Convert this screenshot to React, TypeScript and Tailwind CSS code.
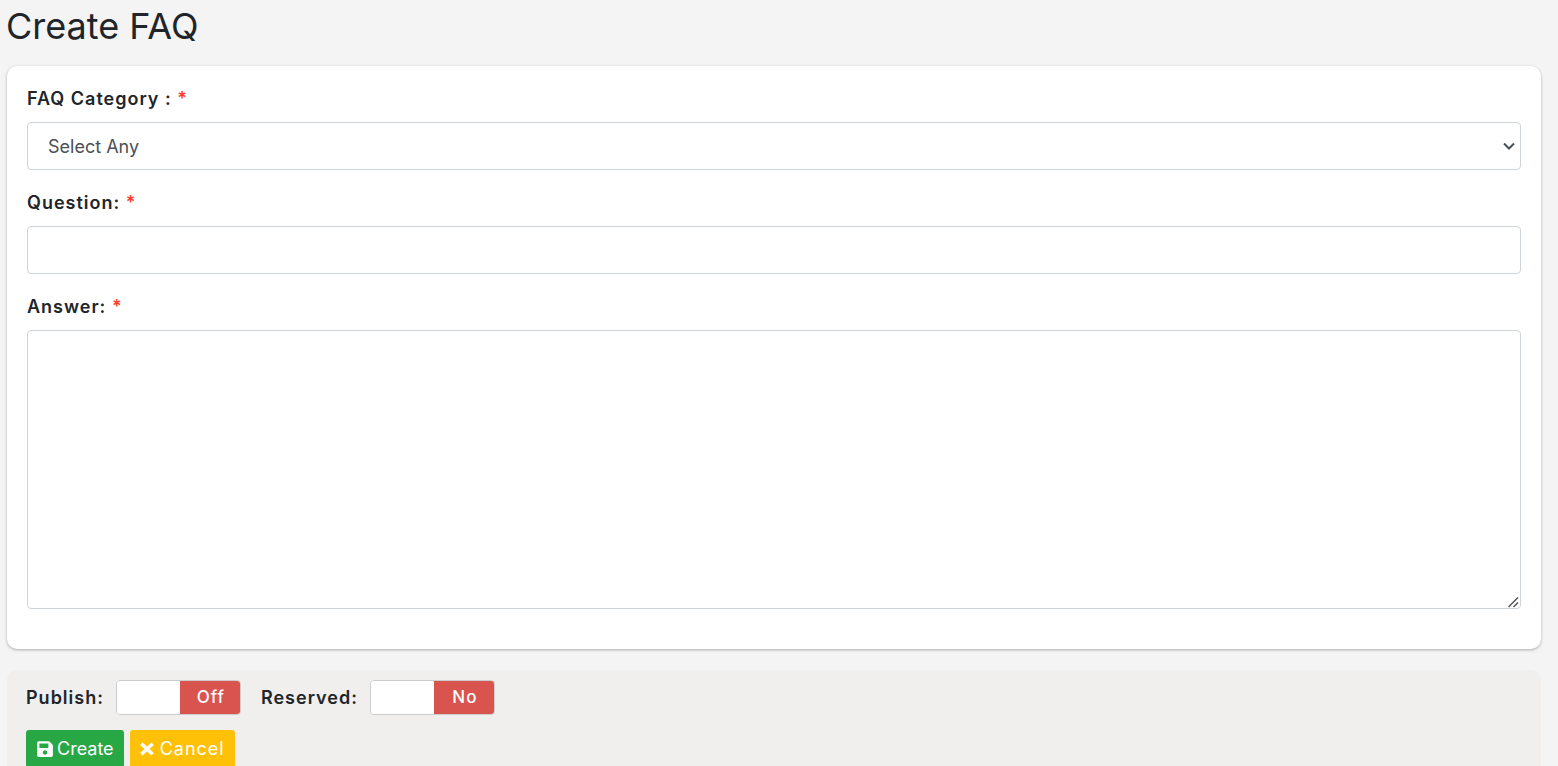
import type { ReactNode } from 'react';
import { FaSave } from 'react-icons/fa';

const fieldClass =
  'block w-full rounded border border-[#ced4da] bg-white px-5 text-lg text-[#495057] outline-none focus:border-[#80bdff]';

function FieldLabel({ htmlFor, children }: { htmlFor: string; children: ReactNode }) {
  return (
    <label htmlFor={htmlFor} className="mb-[10px] block text-lg leading-[26px] font-semibold tracking-[1px]">
      {children} <span className="text-[#ff3b30]">*</span>
    </label>
  );
}

function CloseIcon() {
  return (
    <svg viewBox="0 0 14 14" className="size-[14px]" stroke="currentColor" strokeWidth="3.6">
      <path d="M1.4 1.8 L12.6 12.2 M12.6 1.8 L1.4 12.2" />
    </svg>
  );
}

function Toggle({ id, label, on, off }: { id: string; label: string; on: string; off: string }) {
  return (
    <div className="flex items-center gap-3">
      <label htmlFor={id} className="text-lg leading-[26px] font-semibold tracking-[1px]">
        {label}
      </label>
      <label className="group relative flex h-[35px] w-[125px] cursor-pointer overflow-hidden rounded border border-[#cccccc] bg-white text-[17px] font-medium tracking-[1px] text-white">
        <input id={id} type="checkbox" className="peer sr-only" />
        <span className="hidden w-[60px] items-center justify-center bg-[#337ab7] group-has-checked:flex">
          {on}
        </span>
        <span className="flex-1 bg-white" />
        <span className="flex w-[60px] items-center justify-center bg-[#d9534f] pl-[2px] group-has-checked:hidden">
          {off}
        </span>
      </label>
    </div>
  );
}

export default function App() {
  return (
    <div className="min-h-screen bg-[#f4f4f4] pr-[17px] pl-[7px] font-['Inter',sans-serif] text-[#212529]">
      <h1 className="-ml-px pt-1 text-4xl leading-[44px]">Create FAQ</h1>
      <form className="mt-[18px]">
        <div className="rounded-[10px] bg-white px-5 pt-5 pb-10 shadow-[0_1px_3px_rgba(0,0,0,0.3)]">
          <div className="mb-5">
            <FieldLabel htmlFor="category">FAQ Category :</FieldLabel>
            <div className="relative">
              <select id="category" className={`${fieldClass} h-12 appearance-none pt-[2px]`}>
                <option>Select Any</option>
              </select>
              <svg
                viewBox="0 0 12 8"
                className="pointer-events-none absolute top-5 right-[6px] h-2 w-3"
                fill="none"
                stroke="#495057"
                strokeWidth="2"
              >
                <path d="M1 1.5 L6 6.5 L11 1.5" />
              </svg>
            </div>
          </div>
          <div className="mb-5">
            <FieldLabel htmlFor="question">Question:</FieldLabel>
            <input id="question" type="text" className={`${fieldClass} h-12`} />
          </div>
          <div>
            <FieldLabel htmlFor="answer">Answer:</FieldLabel>
            <div className="relative">
              <textarea
                id="answer"
                className={`${fieldClass} h-[279px] resize-y py-3 [&::-webkit-resizer]:bg-transparent`}
              />
              <svg
                viewBox="0 0 11 11"
                className="pointer-events-none absolute right-[2px] bottom-[1px] size-[11px]"
                fill="none"
                stroke="#555555"
                strokeWidth="1.5"
              >
                <path d="M0.5 10 L10 0.5 M5.5 10 L10 5.5" />
              </svg>
            </div>
          </div>
        </div>
        <div className="mt-[21px] rounded-[10px] bg-[#f0efed] px-[19px] pt-[10px] pb-5">
          <div className="flex gap-5">
            <Toggle id="publish" label="Publish:" on="On" off="Off" />
            <Toggle id="reserved" label="Reserved:" on="Yes" off="No" />
          </div>
          <div className="mt-[15px] flex gap-[6px] text-lg text-white">
            <button
              type="submit"
              className="flex h-[38px] items-center gap-[3px] rounded-[3px] bg-[#28a745] px-[10px]"
            >
              <FaSave className="size-[18px]" />
              Create
            </button>
            <button
              type="button"
              className="flex h-[38px] items-center gap-[6px] rounded-[3px] bg-[#ffc107] px-[10px] tracking-[1px]"
            >
              <CloseIcon />
              Cancel
            </button>
          </div>
        </div>
      </form>
    </div>
  );
}
